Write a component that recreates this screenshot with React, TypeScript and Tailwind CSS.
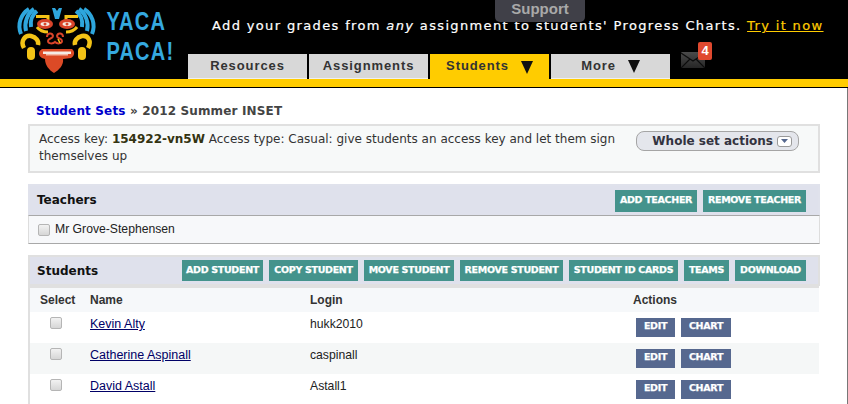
import React from "react";

function Logo() {
  return (
    <svg width="100" height="79" viewBox="0 0 100 79" className="shrink-0">
      <g fill="none" stroke="#2ea6dd" strokeWidth="4" strokeLinecap="butt">
        <path d="M21 34C17 24 21 14 29 9" />
        <path d="M26 31C24 23 27 14 34 9" />
        <path d="M31 27C30 21 32 15 37 11" />
        <path d="M92 34C96 24 92 14 84 9" />
        <path d="M87 31C89 23 86 14 79 9" />
        <path d="M82 27C83 21 81 15 76 11" />
      </g>
      <path d="M52 8h3l2 3 2-3h3l-3 11h-4z" fill="#2ea6dd" />
      <g fill="none" stroke="#f3c316" strokeWidth="3">
        <path d="M36 16.500h12v4" />
        <path d="M78 16.500H66v4" />
        <path d="M37 27c3 4 6 5 11 5" />
        <path d="M77 27c-3 4-6 5-11 5" />
      </g>
      <ellipse cx="45" cy="24" rx="8" ry="5" fill="#d9442a" />
      <ellipse cx="67" cy="24" rx="8" ry="5" fill="#d9442a" />
      <ellipse cx="45" cy="24" rx="4.5" ry="2" fill="#f5e9e0" />
      <ellipse cx="67" cy="24" rx="4.5" ry="2" fill="#f5e9e0" />
      <circle cx="45" cy="24" r="1.5" fill="#d9442a" />
      <circle cx="67" cy="24" r="1.5" fill="#d9442a" />
      <path d="M47 37c0-4 5-5 6-1 0 3-5 2-5 5 0 3 5 3 7 1 2 2 7 2 7-1 0-3-5-2-5-5 1-4 6-3 6 1" fill="none" stroke="#d9442a" strokeWidth="2" />
      <path d="M58 39l2 4" stroke="#f3c316" strokeWidth="1.500" />
      <g fill="none" stroke="#f3c316" strokeWidth="4.500">
        <path d="M24 48C20 41 25 35 31 36c5 1 8 5 7 9" />
        <path d="M88 48C92 41 88 35 82 36c-5 1-8 5-7 9" />
      </g>
      <rect x="27" y="47" width="8" height="13" rx="4" fill="#f3c316" />
      <rect x="78" y="47" width="8" height="13" rx="4" fill="#f3c316" />
      <path d="M42 49h30c3 2 3 7-1 9l-8 1c1 6-4 11-9 14-5-3-9-8-9-14l-3-1c-4-2-4-7 0-9z" fill="#dc4a26" />
      <path d="M43 51.500h28v2.500H43z" fill="#f4ece6" />
      <path d="M46 54h22v1.500H46z" fill="#f4b9a5" />
    </svg>
  );
}

function Tab({ label, active, arrow }: { label: string; active?: boolean; arrow?: boolean }) {
  return (
    <div className={`flex h-[25px] w-[119px] items-center justify-center gap-[12px] pb-[1px] font-['Liberation_Sans',sans-serif] text-[13px] font-bold tracking-[0.9px] text-[#333333] ${active ? "bg-[#ffcc00]" : "border-b border-b-[#f0f0f0] bg-[#d8d8d8]"}`}>
      <span>{label}</span>
      {arrow && (
        <svg width="12" height="13" viewBox="0 0 12 13" className="mt-[2px]">
          <path d="M0 0h12L6 13z" fill="#111111" />
        </svg>
      )}
    </div>
  );
}

function Envelope() {
  return (
    <div className="relative -mt-[2px] ml-[9px] h-[16px] w-[24px] self-start">
      <svg width="24" height="16" viewBox="0 0 24 16" className="block">
        <defs>
          <linearGradient id="env" x1="0" y1="0" x2="0" y2="1">
            <stop offset="0" stopColor="#4a4a4a" />
            <stop offset="1" stopColor="#262626" />
          </linearGradient>
        </defs>
        <rect width="24" height="16" rx="1" fill="url(#env)" />
        <path d="M0 1l12 8 12-8M0 16l9-9M24 16l-9-9" fill="none" stroke="#0c0c0c" strokeWidth="1.200" />
      </svg>
      <div className="absolute left-[17px] top-[-10px] flex h-[18px] w-[14px] items-center justify-center rounded-[2px] bg-[#e0492f] font-['Liberation_Sans',sans-serif] text-[13px] font-bold text-white">4</div>
    </div>
  );
}

function Btn({ label, w, kind }: { label: string; w: string; kind?: "navy" | "tall" }) {
  const look = kind === "navy" ? "h-[19px] bg-[#56688f] pb-[3px]" : kind === "tall" ? "h-[22px] bg-[#44938c]" : "h-[21px] bg-[#44938c]";
  return (
    <div className={`flex shrink-0 items-center justify-center font-['DejaVu_Sans',sans-serif] text-[9.5px] font-bold tracking-[-0.3px] whitespace-nowrap text-white [-webkit-text-stroke:0.25px_white] ${w} ${look}`}>
      {label}
    </div>
  );
}

const rows = [
  { name: "Kevin Alty", login: "hukk2010", bg: "bg-white" },
  { name: "Catherine Aspinall", login: "caspinall", bg: "bg-[#f5f7f7]" },
  { name: "David Astall", login: "Astall1", bg: "bg-white" },
];

function Checkbox() {
  return <span className="block h-[12px] w-[12px] rounded-[2px] border border-[#b5b5b5] bg-gradient-to-b from-[#f2f2f2] to-[#d6d6d6]" />;
}

export default function App() {
  return (
    <div className="h-[404px] w-[848px] overflow-hidden bg-white font-['Liberation_Sans',sans-serif]">
      <header className="relative h-[88px] border-b border-b-black bg-black">
        <div className="flex h-[79px] items-start">
          <Logo />
          <div className="flex w-[78px] shrink-0 origin-left scale-x-[0.8] flex-col pl-[8px] pt-[6px] text-[25px] leading-[30px] font-bold tracking-[1.5px] text-[#35a9e0]">
            <span>YACA</span>
            <span>PACA!</span>
          </div>
          <div className="flex h-[79px] min-w-0 grow flex-col">
            <p className="pl-[34px] pt-[17px] font-['DejaVu_Sans',sans-serif] text-[13px] leading-[18px] tracking-[1.36px] whitespace-nowrap text-white [-webkit-text-stroke:0.2px]">
              Add your grades from <em>any</em> assignment to students' Progress Charts.{" "}
              <a className="text-[#ffcc00] underline">Try it now</a>
            </p>
            <div className="mt-[19px] flex gap-[2px] pl-[10px]">
              <Tab label="Resources" />
              <Tab label="Assignments" />
              <Tab label="Students" active arrow />
              <Tab label="More" arrow />
              <Envelope />
            </div>
          </div>
        </div>
        <div className="h-[8px] bg-[#ffcc00]" />
        <div className="absolute left-[495px] top-0 flex h-[22px] w-[90px] items-center justify-center rounded-b-[5px] bg-[#404048] pb-[4px] text-[15px] font-bold text-[#a9a9a9]">
          Support
        </div>
      </header>

      <main className="h-[316px] border-r border-r-[#777777] pr-[27px] pl-[28px]">
        <h1 className="pt-[14px] pl-[8px] font-['DejaVu_Sans',sans-serif] text-[12px] leading-[19px] font-bold tracking-[0.15px] text-[#444444]">
          <span className="text-[#0000cc]">Student Sets</span> » 2012 Summer INSET
        </h1>

        <section className="mt-[3px] flex h-[49px] justify-between border-2 border-[#e0e0e0] bg-[#f7f9f9] pr-[19px] pl-[9px] pt-[5px]">
          <div className="font-['DejaVu_Sans',sans-serif] text-[12px] leading-[17px] whitespace-nowrap text-[#333333]">
            <p>
              Access key: <b className="text-[#333311]">154922-vn5W</b> Access type: Casual: give students an access key and let them sign
            </p>
            <p>themselves up</p>
          </div>
          <div className="flex h-[20px] w-[163px] shrink-0 items-center justify-end gap-[4px] rounded-[8px] border border-[#a5a5a5] bg-[#e4e6ec] pr-[6px] font-['DejaVu_Sans',sans-serif] text-[12px] font-bold text-[#333340]">
            <span>Whole set actions</span>
            <span className="flex h-[11px] w-[15px] items-center justify-center rounded-[3px] border border-[#999999] bg-white">
              <svg width="7" height="4" viewBox="0 0 7 4"><path d="M0 0h7L3.500 4z" fill="#56688f" /></svg>
            </span>
          </div>
        </section>

        <section className="mt-[11px] flex h-[31px] items-center justify-between border-2 border-b-0 border-[#e0e2ec] bg-[#dfe1ec] pr-[12px] pl-[7px]">
          <h2 className="mb-[2px] font-['DejaVu_Sans',sans-serif] text-[12px] font-bold text-[#111111]">Teachers</h2>
          <div className="flex gap-[6px]">
            <Btn label="ADD TEACHER" w="w-[82px]" kind="tall" />
            <Btn label="REMOVE TEACHER" w="w-[103px]" kind="tall" />
          </div>
        </section>
        <section className="flex h-[29px] items-center gap-[5px] border-x border-y border-[#a8a8a8] border-x-[#dddddd] bg-[#f7f8fa] pl-[9px] text-[12.2px] text-[#222222]">
          <Checkbox />
          <span>Mr Grove-Stephensen</span>
        </section>

        <section className="mt-[11px] flex h-[31px] items-center justify-between border-2 border-[#e0e0e0] bg-[#dfe1ec] pr-[12px] pl-[7px]">
          <h2 className="font-['DejaVu_Sans',sans-serif] text-[12px] font-bold text-[#111111]">Students</h2>
          <div className="flex gap-[6px]">
            <Btn label="ADD STUDENT" w="w-[81px]" />
            <Btn label="COPY STUDENT" w="w-[89px]" />
            <Btn label="MOVE STUDENT" w="w-[90px]" />
            <Btn label="REMOVE STUDENT" w="w-[103px]" />
            <Btn label="STUDENT ID CARDS" w="w-[109px]" />
            <Btn label="TEAMS" w="w-[45px]" />
            <Btn label="DOWNLOAD" w="w-[71px]" />
          </div>
        </section>
        <div className="mr-[1px] border-t-2 border-l-2 border-[#e0e0e0]">
          <div className="grid h-[24px] grid-cols-[60px_220px_323px_1fr] items-center bg-[#f6f8fa] text-[12px] font-bold text-[#333333]">
            <span className="pl-[10px]">Select</span>
            <span>Name</span>
            <span>Login</span>
            <span>Actions</span>
          </div>
          {rows.map((r) => (
            <div key={r.name} className={`grid h-[31px] grid-cols-[60px_220px_323px_1fr] items-start ${r.bg} text-[#222222]`}>
              <span className="pt-[5px] pl-[20px]"><Checkbox /></span>
              <a className="pt-[3px] text-[12.5px] text-[#000066] underline">{r.name}</a>
              <span className="pt-[3px] text-[12.2px]">{r.login}</span>
              <span className="flex gap-[6px] pt-[6px] pl-[3px]">
                <Btn label="EDIT" w="w-[39px]" kind="navy" />
                <Btn label="CHART" w="w-[50px]" kind="navy" />
              </span>
            </div>
          ))}
        </div>
      </main>
    </div>
  );
}
